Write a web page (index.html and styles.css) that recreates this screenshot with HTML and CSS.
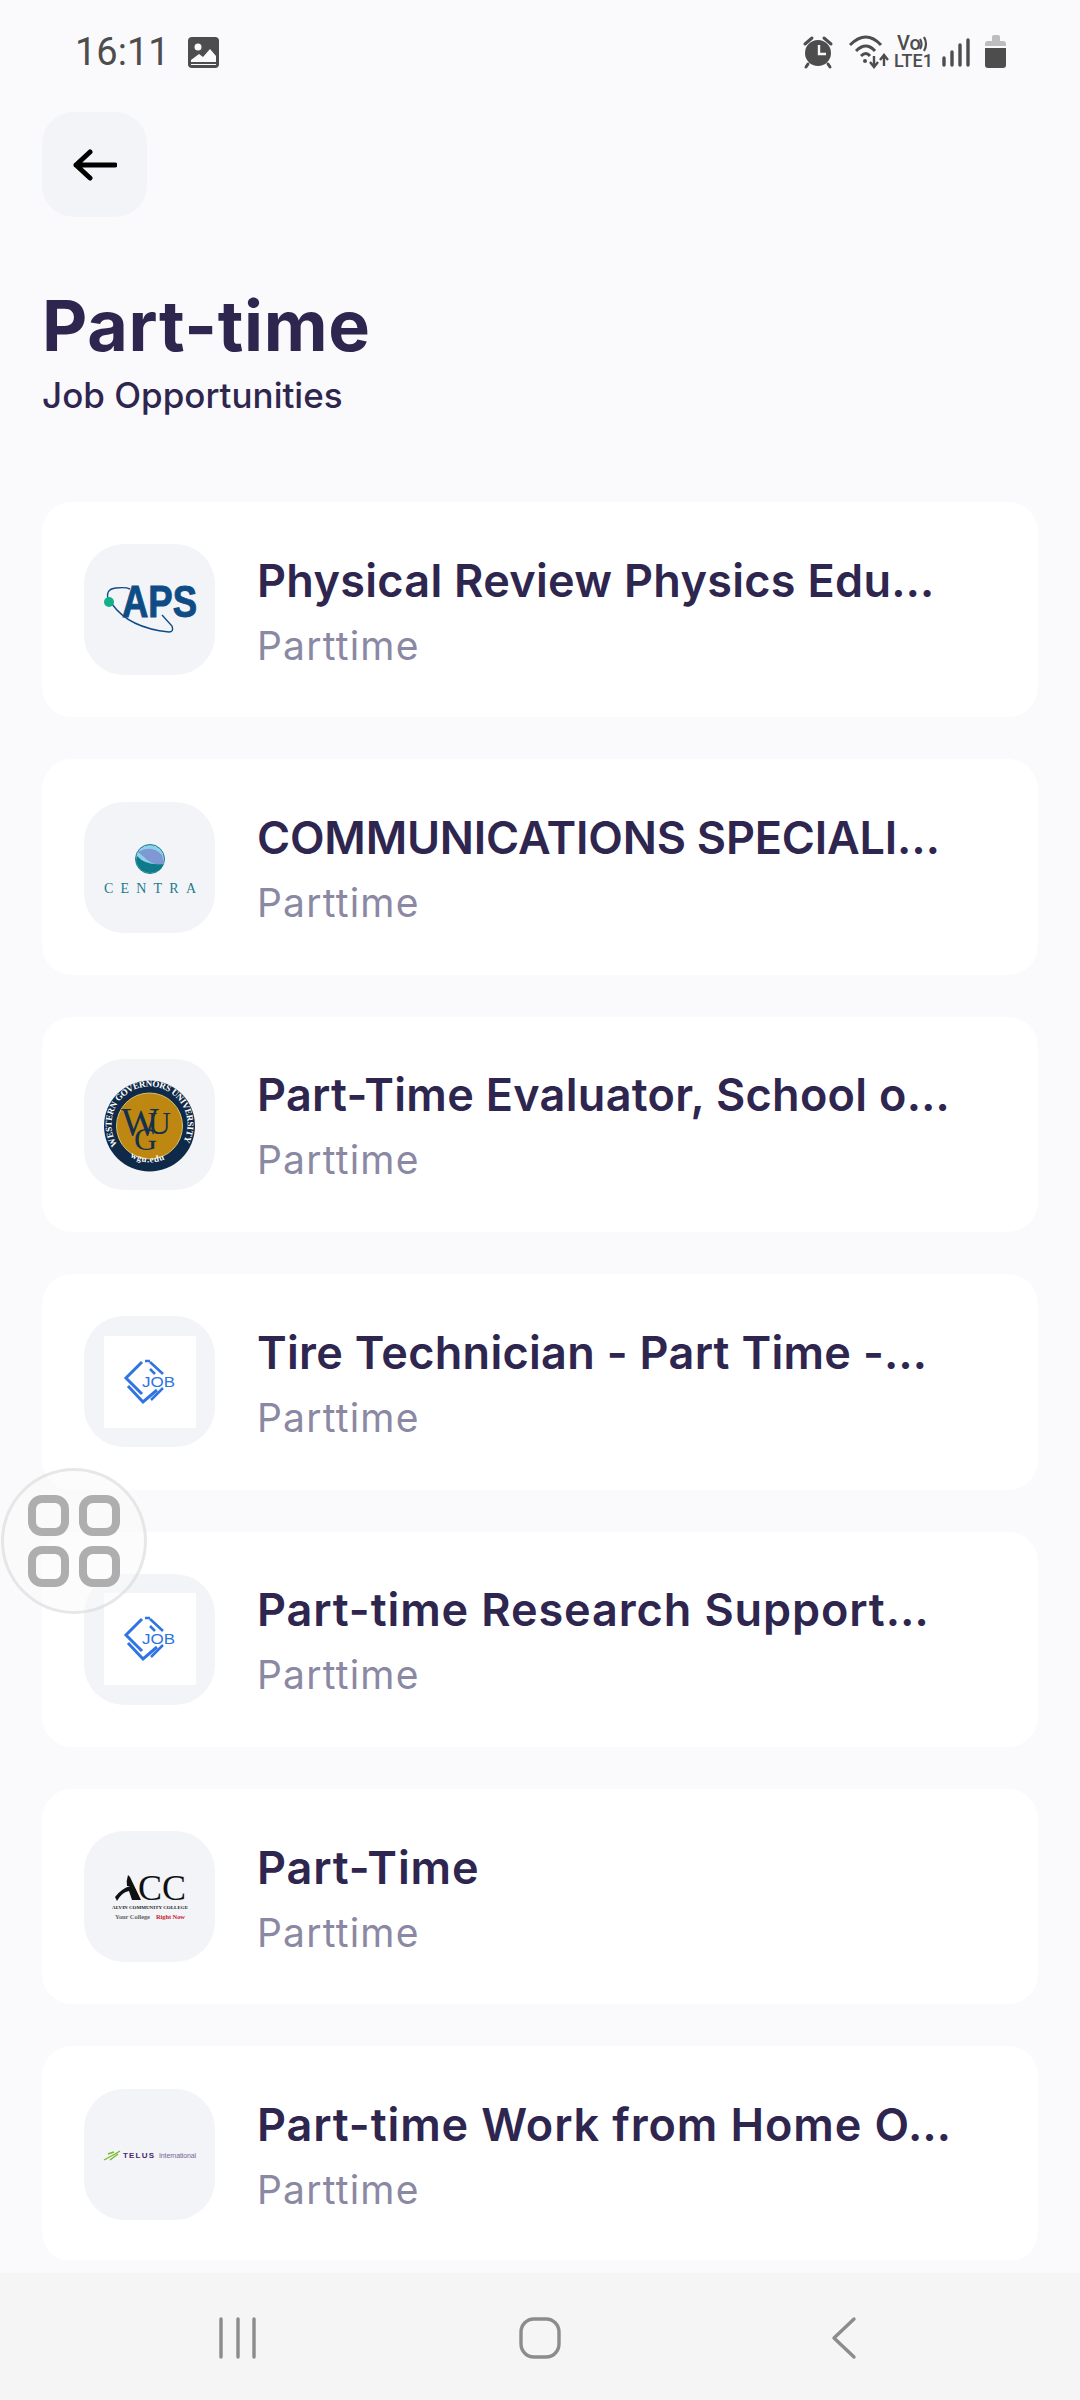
FILE: index.html
```html
<!DOCTYPE html>
<html lang="en">

<head>
    <meta charset="UTF-8">
    <meta name="viewport" content="width=device-width, initial-scale=1.0">
    <title>Part-time</title>
    <link rel="stylesheet" href="styles.css">
</head>

<body>
    <div class="status-bar">
        <div class="status-left">
            <span class="clock">16:11</span>
            <svg class="status-pic" width="31" height="31" viewBox="0 0 31 31">
                <rect width="31" height="31" rx="4" fill="#4d4d4d"/>
                <circle cx="10" cy="10" r="3.500" fill="#fafafc"/>
                <path d="M3 23 L11 17 L15 20 L22 12 L28 19 V25 H3 Z M3 27 H28 V28 H3 Z" fill="#fafafc"/>
            </svg>
        </div>
        <svg class="status-right" width="270" height="90" viewBox="0 0 270 90">
            <!-- alarm -->
            <circle cx="58" cy="43" r="13" fill="#4d4d4d"/>
            <path d="M59 35 V44 H66" fill="none" stroke="#fafafc" stroke-width="2.400"/>
            <path d="M45 34 L52 28 M71 34 L64 28 M48 54 L46 57 M68 54 L70 57" stroke="#4d4d4d" stroke-width="3" stroke-linecap="round"/>
            <!-- wifi -->
            <path d="M90 35 Q106 19 121 35 M96 41 Q106 31 115 41 M101 46 Q106 41 110 46" fill="none" stroke="#4d4d4d" stroke-width="3"/>
            <circle cx="105" cy="51" r="2" fill="#4d4d4d"/>
            <path d="M114 46 V56 M110 52 L114 57 L118 52 M124 56 V46 M120 50 L124 45 L128 50" fill="none" stroke="#4d4d4d" stroke-width="2.400"/>
            <!-- volte -->
            <text class="volte vo" x="137" y="40">Vo</text>
            <path d="M160 29 Q163 34 160 39 M164 27 Q168 34 164 41" fill="none" stroke="#4d4d4d" stroke-width="2.200"/>
            <text class="volte" x="134" y="57">LTE1</text>
            <!-- signal -->
            <path d="M184 48 V55 M192 42 V55 M200 35 V55 M208 30 V55" stroke="#4d4d4d" stroke-width="3.400" stroke-linecap="round"/>
            <!-- battery -->
            <path d="M232 27 Q232 25 234 25 H238 Q240 25 240 27 V31 H243 Q246 31 246 34 V36 H225 V34 Q225 31 228 31 H232 Z" fill="#bdbdbd"/>
            <path d="M225 38 H246 V55 Q246 58 243 58 H228 Q225 58 225 55 Z" fill="#4d4d4d"/>
        </svg>
    </div>

    <div class="back-btn">
        <svg width="44" height="32" viewBox="0 0 44 32">
            <path d="M42 16 H3 M17 3 L3 16 L17 29" fill="none" stroke="#000" stroke-width="5" stroke-linecap="round" stroke-linejoin="round"/>
        </svg>
    </div>

    <div class="heading">
        <h1>Part-time</h1>
        <p>Job Opportunities</p>
    </div>

    <div class="job-list">
        <div class="job-card">
            <div class="job-logo">
                <svg width="131" height="131" viewBox="0 0 131 131">
                    <path d="M25 58 Q20 45 32 44 Q42 43 46 45 M28 60 Q45 84 85 88 Q90 88 88 82 L78 71" fill="none" stroke="#0f4c85" stroke-width="1.400"/>
                    <circle cx="25" cy="58" r="5" fill="#10b088"/>
                    <text class="logo-aps" x="38" y="73" textLength="75" lengthAdjust="spacingAndGlyphs">APS</text>
                </svg>
            </div>
            <div class="job-text">
                <div class="job-title">Physical Review Physics Edu…</div>
                <div class="job-type">Parttime</div>
            </div>
        </div>

        <div class="job-card">
            <div class="job-logo">
                <svg width="131" height="131" viewBox="0 0 131 131">
                    <circle cx="66" cy="57" r="14.500" fill="#8ed0ea" stroke="#1d7f8d" stroke-width="1"/>
                    <path d="M54 50 Q68 42 78 53 L80 62 Q68 64 60 55 Z" fill="#7f97d3"/>
                    <path d="M53 54 Q62 64 79 62 Q78 70 66 71 Q54 70 52 58 Z" fill="#0f7a8a"/>
                    <text class="logo-centra" x="20" y="91" textLength="92">CENTRA</text>
                </svg>
            </div>
            <div class="job-text">
                <div class="job-title caps">COMMUNICATIONS SPECIALI…</div>
                <div class="job-type">Parttime</div>
            </div>
        </div>

        <div class="job-card">
            <div class="job-logo">
                <svg width="131" height="131" viewBox="0 0 131 131">
                    <defs>
                        <path id="wgu-arc" d="M 33.500 86 A 38 38 0 1 1 97.500 86"/>
                        <path id="wgu-low" d="M 46 98 A 38 38 0 0 0 85 98"/>
                    </defs>
                    <circle cx="65.500" cy="67" r="45.500" fill="#0f2a48"/>
                    <circle cx="65.500" cy="67" r="33" fill="#bd8712" stroke="#d8c070" stroke-width="1"/>
                    <text class="logo-seal"><textPath href="#wgu-arc" textLength="158">WESTERN GOVERNORS UNIVERSITY</textPath></text>
                    <text class="logo-seal"><textPath href="#wgu-low" textLength="36">wgu.edu</textPath></text>
                    <text class="logo-wgu" x="37" y="76">W<tspan class="logo-wgu-sm" dx="-11" dy="-1">U</tspan><tspan class="logo-wgu-sm" dx="-37" dy="16">G</tspan></text>
                </svg>
            </div>
            <div class="job-text">
                <div class="job-title">Part-Time Evaluator, School o…</div>
                <div class="job-type">Parttime</div>
            </div>
        </div>

        <div class="job-card">
            <div class="job-logo">
                <div class="job-thumb">
                    <svg width="92" height="92" viewBox="0 0 92 92">
                        <path d="M38 26 L22 42 L38 58 M24 50 L39 66 L53 54" fill="none" stroke="#2f74e0" stroke-width="3"/>
                        <path d="M47 64 L59 52 M46 26 L59 38 M46 33 L51 38 M41 25 L46 25" fill="none" stroke="#2f74e0" stroke-width="2.500"/>
                        <text class="logo-job" x="38" y="51" textLength="33" lengthAdjust="spacingAndGlyphs">JOB</text>
                    </svg>
                </div>
            </div>
            <div class="job-text">
                <div class="job-title">Tire Technician - Part Time -…</div>
                <div class="job-type">Parttime</div>
            </div>
        </div>

        <div class="job-card">
            <div class="job-logo">
                <div class="job-thumb">
                    <svg width="92" height="92" viewBox="0 0 92 92">
                        <path d="M38 26 L22 42 L38 58 M24 50 L39 66 L53 54" fill="none" stroke="#2f74e0" stroke-width="3"/>
                        <path d="M47 64 L59 52 M46 26 L59 38 M46 33 L51 38 M41 25 L46 25" fill="none" stroke="#2f74e0" stroke-width="2.500"/>
                        <text class="logo-job" x="38" y="51" textLength="33" lengthAdjust="spacingAndGlyphs">JOB</text>
                    </svg>
                </div>
            </div>
            <div class="job-text">
                <div class="job-title wide">Part-time Research Support…</div>
                <div class="job-type">Parttime</div>
            </div>
        </div>

        <div class="job-card">
            <div class="job-logo">
                <svg width="131" height="131" viewBox="0 0 131 131">
                    <path d="M31 66 Q37 58 46 55 L43 55 Q42 50 44 44 L46 46 L57 69 H48 L45 60 Q38 61 33 70 Z" fill="#111"/>
                    <text class="logo-acc" x="54" y="69">CC</text>
                    <text class="logo-alvin" x="28" y="78" textLength="76">ALVIN COMMUNITY COLLEGE</text>
                    <text class="logo-now" x="31" y="88" textLength="35">Your College</text>
                    <text class="logo-now red" x="72" y="88" textLength="29">Right Now</text>
                </svg>
            </div>
            <div class="job-text">
                <div class="job-title wide">Part-Time</div>
                <div class="job-type">Parttime</div>
            </div>
        </div>

        <div class="job-card">
            <div class="job-logo">
                <svg width="131" height="131" viewBox="0 0 131 131">
                    <path d="M20 71 L31 65 L36 62 M24 65 L30 63 M26 71 L34 65" fill="none" stroke="#7cb82f" stroke-width="1.400"/>
                    <text class="logo-telus" x="39" y="69" textLength="31">TELUS</text>
                    <text class="logo-intl" x="75" y="69" textLength="37">International</text>
                </svg>
            </div>
            <div class="job-text">
                <div class="job-title wide">Part-time Work from Home O…</div>
                <div class="job-type">Parttime</div>
            </div>
        </div>
    </div>

    <div class="nav-bar">
        <svg width="44" height="44" viewBox="0 0 44 44">
            <path d="M6 3 V41 M23 3 V41 M39 3 V41" stroke="#8c8c8c" stroke-width="3.400" stroke-linecap="round"/>
        </svg>
        <svg width="44" height="44" viewBox="0 0 44 44">
            <rect x="3" y="3" width="38" height="38" rx="13" fill="none" stroke="#8c8c8c" stroke-width="3.400"/>
        </svg>
        <svg width="44" height="44" viewBox="0 0 44 44">
            <path d="M33 3 L13 22 L33 41" fill="none" stroke="#8c8c8c" stroke-width="3.400" stroke-linecap="round" stroke-linejoin="round"/>
        </svg>
    </div>

    <div class="float-btn">
        <span></span><span></span><span></span><span></span>
    </div>
</body>

</html>
```

FILE: styles.css
```css
* {
    margin: 0;
    padding: 0;
    box-sizing: border-box;
}
html, body {
    width: 1080px;
    height: 2400px;
    overflow: hidden;
}
body {
    position: relative;
    display: flex;
    flex-direction: column;
    background-color: #fafafc;
    font-family: "Inter", "Liberation Sans", sans-serif;
    color: #2f2650;
}
.status-bar {
    height: 112px;
    flex-shrink: 0;
    display: flex;
    justify-content: space-between;
    padding: 10px 50px 0 75px;
}
.status-left {
    display: flex;
    align-items: center;
    gap: 18px;
    height: 84px;
}
.clock {
    font-family: Roboto, sans-serif;
    font-size: 38px;
    font-weight: 400;
    color: #4d4d4d;
}
.volte {
    font-family: Roboto, sans-serif;
    font-size: 18px;
    font-weight: 500;
    fill: #4d4d4d;
}
.volte.vo {
    font-size: 20px;
}
.back-btn {
    width: 105px;
    height: 105px;
    flex-shrink: 0;
    margin-left: 42px;
    background-color: #f3f4f8;
    border-radius: 32px;
    display: flex;
    align-items: center;
    justify-content: center;
}
.heading {
    padding: 67px 42px 0;
    height: 285px;
    flex-shrink: 0;
}
.heading h1 {
    font-size: 70px;
    line-height: 84px;
    font-weight: 700;
    letter-spacing: 0.7px;
}
.heading p {
    font-size: 35px;
    line-height: 46px;
    font-weight: 500;
    margin-top: 4px;
}
.job-list {
    flex: 1;
    overflow: hidden;
    display: flex;
    flex-direction: column;
    gap: 42px;
    padding: 0 42px;
}
.job-card {
    height: 215.4px;
    flex-shrink: 0;
    background-color: #fff;
    border-radius: 30px;
    display: flex;
    align-items: center;
    gap: 42px;
    padding: 0 42px;
}
.job-logo {
    width: 131px;
    height: 131px;
    flex-shrink: 0;
    background-color: #f2f4f8;
    border-radius: 40px;
    display: flex;
    align-items: center;
    justify-content: center;
}
.job-thumb {
    width: 92px;
    height: 92px;
    background-color: #fff;
}
.job-text {
    padding-top: 3px;
}
.job-title {
    font-size: 45px;
    line-height: 58px;
    font-weight: 600;
    letter-spacing: 0.3px;
    white-space: nowrap;
}
.job-title.caps {
    letter-spacing: -0.2px;
}
.job-title.wide {
    letter-spacing: 0.9px;
}
.job-type {
    font-size: 39px;
    line-height: 50px;
    letter-spacing: 1.2px;
    color: #8a88a3;
    margin-top: 11px;
}
.logo-aps {
    font-family: "Liberation Sans", sans-serif;
    font-size: 44px;
    font-weight: 700;
    fill: #0f4c85;
    stroke: #0f4c85;
    stroke-width: 1px;
}
.logo-centra {
    font-family: "Liberation Serif", serif;
    font-size: 14px;
    fill: #1f7a8c;
}
.logo-seal {
    font-family: "Liberation Serif", serif;
    font-size: 9px;
    font-weight: 700;
    fill: #fff;
}
.logo-wgu {
    font-family: "Liberation Serif", serif;
    font-size: 40px;
    fill: #14304d;
}
.logo-wgu-sm {
    font-size: 32px;
}
.logo-job {
    font-family: "Liberation Sans", sans-serif;
    font-size: 14px;
    fill: #2f74e0;
}
.logo-acc {
    font-family: "Liberation Serif", serif;
    font-size: 36px;
    fill: #111;
}
.logo-alvin {
    font-family: "Liberation Serif", serif;
    font-size: 5px;
    font-weight: 700;
    fill: #222;
}
.logo-now {
    font-family: "Liberation Serif", serif;
    font-size: 6.500px;
    font-weight: 700;
    fill: #666;
}
.logo-now.red {
    fill: #c8202f;
}
.logo-telus {
    font-family: "Liberation Sans", sans-serif;
    font-size: 8px;
    font-weight: 700;
    fill: #4b286d;
}
.logo-intl {
    font-family: "Liberation Sans", sans-serif;
    font-size: 7px;
    fill: #7a6394;
}
.nav-bar {
    height: 127px;
    flex-shrink: 0;
    background-color: #f5f5f5;
    display: flex;
    justify-content: center;
    gap: 259px;
    padding-top: 43px;
    margin-top: 13px;
}
.float-btn {
    position: absolute;
    left: 1px;
    top: 1468px;
    width: 146px;
    height: 146px;
    border-radius: 50%;
    border: 3px solid rgba(200, 200, 200, 0.4);
    background-color: rgba(250, 250, 250, 0.5);
    display: grid;
    grid-template-columns: 41px 41px;
    grid-template-rows: 41px 41px;
    gap: 10px;
    justify-content: center;
    align-content: center;
}
.float-btn span {
    border: 8px solid #aeaeae;
    border-radius: 14px;
}
```
